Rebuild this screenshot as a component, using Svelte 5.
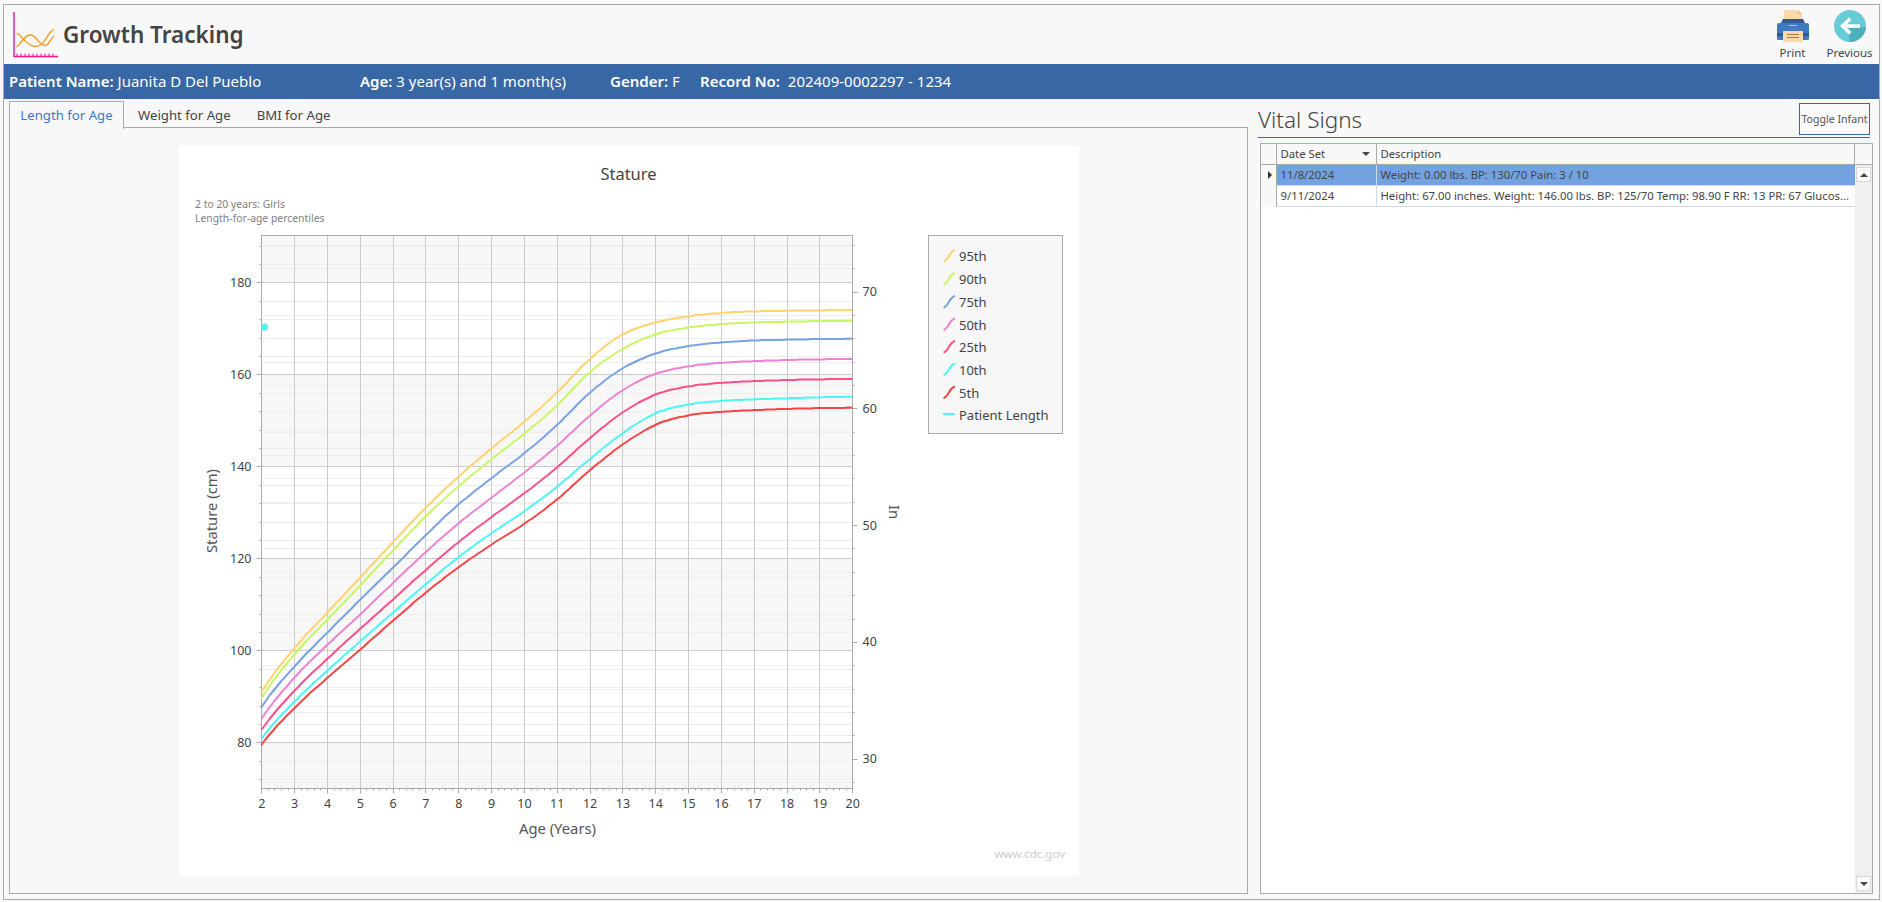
<script>
  const X0 = 179;
  const Y0 = 146;
  const W = 900;
  const H = 730;
  const ax = (a) => 261.3 + (a - 2) * 32.83 - X0;
  const cy = (c) => 742.3 - (c - 80) * 4.6 - Y0;
  const iy = (i) => 408.3 - (i - 60) * 11.68 - Y0;
  const crisp = (v) => Math.round(v) + 0.5;
  const L = crisp(ax(2));
  const R = crisp(ax(20));
  const T = 235.5 - Y0;
  const B = 788.5 - Y0;

  const ages = Array.from({ length: 19 }, (_, i) => i + 2);
  const bands = [[190, 180], [160, 140], [120, 100], [80, 70]];
  const cmMajor = [80, 100, 120, 140, 160, 180];
  const cmMinor = [];
  for (let c = 72; c <= 188; c += 4) if (c % 20 !== 0) cmMinor.push(c);
  const inMajor = [30, 40, 50, 60, 70];
  const inMinor = [];
  for (let i = 28; i <= 74; i += 2) if (i % 10 !== 0) inMinor.push(i);
  const ageMinor = [];
  for (let a = 2; a < 20; a += 0.2) if (Math.abs(a - Math.round(a)) > 0.01) ageMinor.push(a);

  const table = [
    [692.3, 698.3, 707.3, 719, 730, 739, 745],
    [647.3, 653.3, 665.7, 676.7, 690, 701, 707.3],
    [613, 620, 633, 645, 659, 670.7, 678],
    [578, 586, 600, 615, 629, 641.7, 650],
    [542.7, 550.7, 568.3, 583.3, 600, 613, 621],
    [507.3, 516, 535, 552, 570, 584, 592.5],
    [476.7, 486, 504, 523, 542, 557, 567],
    [448.3, 459.3, 478.3, 498, 517, 533, 544.5],
    [422.7, 434.3, 454, 473, 494, 512, 524.5],
    [393.3, 406.7, 426, 446.7, 468, 487.5, 500.5],
    [358, 370.7, 391.7, 415, 438, 459, 470],
    [332.7, 348.3, 367.3, 389.3, 411.7, 432.7, 444],
    [322, 333.3, 352.7, 372.7, 393.3, 411.7, 423.5],
    [316, 327.3, 345.7, 366, 386, 404, 414.7],
    [312.7, 324, 342.3, 362.7, 382.7, 400.7, 411.7],
    [311.3, 322.3, 340.3, 361, 381, 399.3, 410],
    [310.7, 321.7, 339.7, 360, 380, 398.3, 409],
    [310.3, 321, 339, 359.3, 379.3, 397.3, 408],
    [310, 320.7, 338.7, 359, 379, 396.7, 407.7]
  ];

  const series = [
    { name: '95th', color: '#ffd36e' },
    { name: '90th', color: '#c9f763' },
    { name: '75th', color: '#7aa3e2' },
    { name: '50th', color: '#ee82d2' },
    { name: '25th', color: '#fb4f8c' },
    { name: '10th', color: '#4df6f6' },
    { name: '5th', color: '#f34545' }
  ];

  function line(col) {
    const raw = table.map((r) => r[col] - Y0);
    const ys = raw.map((v, i) =>
      i === 0 || i === raw.length - 1 ? v : (raw[i - 1] + 6 * v + raw[i + 1]) / 8
    );
    const before = ys[0] + 1.45 * (ys[0] - ys[1]);
    const pts = [];
    for (let i = 0; i < ys.length - 1; i++) {
      const p0 = i === 0 ? before : ys[i - 1];
      const p1 = ys[i];
      const p2 = ys[i + 1];
      const p3 = ys[Math.min(i + 2, ys.length - 1)];
      for (let s = 0; s < 8; s++) {
        const t = s / 8;
        const v =
          0.5 *
          (2 * p1 +
            (p2 - p0) * t +
            (2 * p0 - 5 * p1 + 4 * p2 - p3) * t * t +
            (3 * p1 - p0 - 3 * p2 + p3) * t * t * t);
        pts.push(`${ax(2 + i + t).toFixed(1)},${(Math.round(v * 2) / 2).toFixed(1)}`);
      }
    }
    pts.push(`${ax(20).toFixed(1)},${ys[ys.length - 1].toFixed(1)}`);
    return pts.join(' ');
  }

  const legendYs = [256, 279, 302, 324.5, 347, 369.5, 392.5];
  const rows = [
    { date: '11/8/2024', desc: 'Weight: 0.00 lbs. BP: 130/70 Pain: 3 / 10', selected: true },
    { date: '9/11/2024', desc: 'Height: 67.00 inches. Weight: 146.00 lbs. BP: 125/70 Temp: 98.90 F RR: 13 PR: 67 Glucos...', selected: false }
  ];
</script>

<div class="window">
  <header class="head">
    <div class="brand">
      <svg class="logo" width="48" height="46" viewBox="0 0 48 46">
        <path d="M2 0V44.5H46" fill="none" stroke="#f0148c" stroke-width="1.4" />
        <path d="M5 44V41.5M9 44V41.5M13 44V41.5M17 44V41.5M21 44V41.5M25 44V41.5M29 44V41.5M33 44V41.5M37 44V41.5M41 44V41.5" stroke="#f0148c" stroke-width="1" />
        <path d="M5 21C10 24 15 34 23 34.5C31 35 34 26 37 22C38.5 20 40 18.5 42 17.5" fill="none" stroke="#f79a1e" stroke-width="1.3" />
        <path d="M4.5 35C9 32 12 23 18 23C25 23 27 33.5 33 33.5C37 33.5 38 27 42 24" fill="none" stroke="#f79a1e" stroke-width="1.3" />
      </svg>
      <h1>Growth Tracking</h1>
    </div>
    <div class="tools">
      <div class="tool tool-print">
        <svg width="32" height="32" viewBox="0 0 32 32">
          <path d="M7 0H21L25 4V13H7Z" fill="#fbd9ad" />
          <path d="M21 0L25 4H21Z" fill="#eebf88" />
          <path d="M6 9H26L28 13H4Z" fill="#2d5a90" />
          <path d="M2 13H30Q32 13 32 15V29Q32 30 30 30H2Q0 30 0 29V15Q0 13 2 13Z" fill="#3f7abf" />
          <rect x="0" y="23" width="32" height="3" fill="#2d5a90" />
          <rect x="12" y="15" width="8" height="1" fill="#a6c6e8" />
          <rect x="6" y="21" width="20" height="11" fill="#fbd9ad" />
          <path d="M10 24.5H22M10 27.5H22" stroke="#9c7b52" stroke-width="1" />
        </svg>
        <span>Print</span>
      </div>
      <div class="tool tool-prev">
        <svg width="32" height="32" viewBox="0 0 32 32">
          <circle cx="16" cy="16" r="16" fill="#67ccd6" />
          <path d="M15 24.5L17.5 22L14 17.8H26L32 17A16 16 0 0 1 15 32Z" fill="#4cafb9" />
          <path d="M6 16L15 7.5L17.5 10L12.8 14.2H26V17.8H12.8L17.5 22L15 24.5Z" fill="#fff" />
        </svg>
        <span>Previous</span>
      </div>
    </div>
  </header>

  <div class="patient">
    <span class="f f1"><b>Patient Name:</b> Juanita D Del Pueblo</span>
    <span class="f f2"><b>Age:</b> 3 year(s) and 1 month(s)</span>
    <span class="f f3"><b>Gender:</b> F</span>
    <span class="f f4"><b>Record No:</b>&nbsp; 202409-0002297 - 1234</span>
  </div>

  <main class="main">
    <section class="left">
      <nav class="tabs">
        <span class="tab active">Length for Age</span>
        <span class="tab">Weight for Age</span>
        <span class="tab">BMI for Age</span>
      </nav>
      <div class="panel">
        <svg class="chart" width={W} height={H} viewBox="0 0 {W} {H}">
          {#each bands as b}
            <rect x={L} y={Math.max(cy(b[0]), T)} width={R - L} height={Math.min(cy(b[1]), B) - Math.max(cy(b[0]), T)} fill="#f7f7f7" />
          {/each}
          {#each cmMinor as c}
            <line class="minor" x1={L} x2={R} y1={crisp(cy(c))} y2={crisp(cy(c))} />
            <line class="tick" x1={L - 2} x2={L} y1={crisp(cy(c))} y2={crisp(cy(c))} />
          {/each}
          {#each inMinor as i}
            {#if iy(i) > T && iy(i) < B}
              <line class="minor" x1={L} x2={R} y1={crisp(iy(i))} y2={crisp(iy(i))} />
              <line class="tick" x1={R} x2={R + 2} y1={crisp(iy(i))} y2={crisp(iy(i))} />
            {/if}
          {/each}
          {#each ages as a}
            <line class="major" x1={crisp(ax(a))} x2={crisp(ax(a))} y1={T} y2={B} />
            <line class="tick" x1={crisp(ax(a))} x2={crisp(ax(a))} y1={B} y2={B + 5} />
            <text class="lbl" x={ax(a) + 0.5} y={B + 19.5} text-anchor="middle">{a}</text>
          {/each}
          {#each ageMinor as a}
            <line class="tick" x1={crisp(ax(a))} x2={crisp(ax(a))} y1={B} y2={B + 2} />
          {/each}
          {#each cmMajor as c}
            <line class="major" x1={L} x2={R} y1={crisp(cy(c))} y2={crisp(cy(c))} />
            <line class="tick" x1={L - 5} x2={L} y1={crisp(cy(c))} y2={crisp(cy(c))} />
            <text class="lbl" x={L - 10} y={cy(c) + 4.5} text-anchor="end">{c}</text>
          {/each}
          {#each inMajor as i}
            <line class="tick" x1={R} x2={R + 5} y1={crisp(iy(i))} y2={crisp(iy(i))} />
            <text class="lbl" x={R + 10} y={iy(i) + 4.5}>{i}</text>
          {/each}
          <rect class="frame" x={L} y={T} width={R - L} height={B - T} />

          {#each series as s, k}
            <polyline points={line(k)} fill="none" stroke={s.color} stroke-width="2" stroke-linejoin="round" />
          {/each}
          <circle cx={264.5 - X0} cy={327 - Y0} r="3.3" fill="#4df6f6" stroke="#6fdce2" stroke-width="0.7" />

          <text class="title" x={628.5 - X0} y={180 - Y0} text-anchor="middle">Stature</text>
          <text class="sub" x={195 - X0} y={208 - Y0}>2 to 20 years: Girls</text>
          <text class="sub" x={195 - X0} y={222 - Y0}>Length-for-age percentiles</text>
          <text class="axis" transform="translate({217 - X0} {511 - Y0}) rotate(-90)" text-anchor="middle">Stature (cm)</text>
          <text class="axis" transform="translate({889 - X0} {512 - Y0}) rotate(90)" text-anchor="middle">In</text>
          <text class="axis" x={557.5 - X0} y={834 - Y0} text-anchor="middle">Age (Years)</text>
          <text class="mark" x={1065 - X0} y={858 - Y0} text-anchor="end">www.cdc.gov</text>

          <rect class="legend" x={928.5 - X0} y={235.5 - Y0} width="134" height="198" />
          {#each series as s, k}
            <path d="M{943.5 - X0} {legendYs[k] + 5.5 - Y0}C{948.5 - X0} {legendYs[k] + 4.5 - Y0} {949 - X0} {legendYs[k] - 4.5 - Y0} {955 - X0} {legendYs[k] - 6 - Y0}" fill="none" stroke={s.color} stroke-width="2" />
            <text class="leg" x={959 - X0} y={legendYs[k] + 5 - Y0}>{s.name}</text>
          {/each}
          <line x1={943 - X0} x2={955 - X0} y1={414 - Y0} y2={414 - Y0} stroke="#4df6f6" stroke-width="2" />
          <text class="leg" x={959 - X0} y={420 - Y0}>Patient Length</text>
        </svg>
      </div>
    </section>

    <section class="right">
      <div class="vs-head">
        <h2>Vital Signs</h2>
        <button class="toggle">Toggle Infant</button>
      </div>
      <div class="grid">
        <div class="g-head">
          <span class="c0"></span>
          <span class="c1">Date Set<i class="sort"></i></span>
          <span class="c2">Description</span>
          <span class="c3"></span>
        </div>
        <div class="g-body">
          <div class="g-rows">
            {#each rows as r}
              <div class="row" class:selected={r.selected}>
                <span class="c0">{#if r.selected}<i class="cursor"></i>{/if}</span>
                <span class="c1">{r.date}</span>
                <span class="c2">{r.desc}</span>
              </div>
            {/each}
          </div>
          <div class="scroll">
            <span class="sbtn"><i class="up"></i></span>
            <span class="sbtn"><i class="down"></i></span>
          </div>
        </div>
      </div>
    </section>
  </main>
</div>

<style>
  :global(body) {
    margin: 0;
    background: #f8f8f8;
    font-family: "Noto Sans", "Open Sans", sans-serif;
    color: #444;
  }
  .window {
    box-sizing: border-box;
    margin: 4px 2.5px 0 3px;
    height: 896px;
    border: 1px solid #aaa;
    display: flex;
    flex-direction: column;
    overflow: hidden;
  }
  .head {
    height: 59px;
    flex: none;
    display: flex;
    justify-content: space-between;
    box-sizing: border-box;
  }
  .brand {
    display: flex;
    align-items: flex-start;
    padding: 7px 0 0 8px;
  }
  .logo {
    flex: none;
  }
  h1 {
    margin: 7px 0 0 3px;
    font-size: 22.5px;
    line-height: 32px;
    font-weight: 600;
    color: #444;
  }
  .tools {
    display: flex;
    padding: 5px 3px 0 0;
  }
  .tool {
    display: flex;
    flex-direction: column;
    align-items: center;
    font-size: 11.5px;
    line-height: 16px;
    color: #444;
  }
  .tool svg {
    margin-bottom: 3px;
  }
  .tool-print {
    width: 60px;
    margin-right: 1px;
  }
  .tool-prev {
    width: 52px;
  }
  .patient {
    height: 35px;
    flex: none;
    background: #3867a5;
    color: #fff;
    display: flex;
    align-items: center;
    font-size: 15px;
    white-space: nowrap;
    box-sizing: border-box;
    padding-left: 5px;
    padding-bottom: 1px;
  }
  .patient b {
    font-weight: 600;
  }
  .f {
    display: block;
  }
  .f1 { width: 351px; }
  .f2 { width: 250px; }
  .f3 { width: 90px; }
  .main {
    flex: 1;
    min-height: 0;
    display: flex;
    padding: 2px 0 5px 5px;
  }
  .left {
    width: 1239px;
    flex: none;
    display: flex;
    flex-direction: column;
  }
  .tabs {
    display: flex;
    height: 27px;
    flex: none;
    font-size: 13.2px;
    margin-bottom: -1px;
    position: relative;
  }
  .tab {
    box-sizing: border-box;
    height: 28px;
    line-height: 26px;
    padding: 0 12px;
    border: 1px solid transparent;
    border-bottom: 0;
    white-space: nowrap;
    color: #444;
  }
  .tab.active {
    color: #3a78c9;
    background: #f8f8f8;
    border-color: #aaa;
    width: 115px;
    text-align: center;
    padding: 0;
    margin-right: 1px;
  }
  .panel {
    flex: 1;
    min-height: 0;
    box-sizing: border-box;
    border: 1px solid #aaa;
    display: flex;
    justify-content: center;
    align-items: flex-start;
    padding-top: 18px;
  }
  .chart {
    display: block;
    background: #fff;
  }
  .minor { stroke: #eeeeee; stroke-width: 1; }
  .major { stroke: #cbcbcb; stroke-width: 1; }
  .tick { stroke: #aaa; stroke-width: 1; }
  .frame { fill: none; stroke: #aaa; stroke-width: 1; }
  .lbl { font-size: 12.5px; fill: #444; }
  .title { font-size: 16.5px; fill: #444; }
  .sub { font-size: 10.4px; fill: #808080; }
  .axis { font-size: 14.8px; fill: #555; }
  .mark { font-size: 11.5px; fill: #ccc; }
  .legend { fill: #f7f7f7; stroke: #aaa; stroke-width: 1; }
  .leg { font-size: 13px; fill: #444; }

  .right {
    flex: 1;
    min-width: 0;
    display: flex;
    flex-direction: column;
    padding: 2px 5.5px 0 10px;
  }
  .vs-head {
    height: 35px;
    flex: none;
    box-sizing: border-box;
    display: flex;
    justify-content: space-between;
    align-items: flex-start;
    border-bottom: 1px solid #3867a5;
    margin-right: 3px;
  }
  h2 {
    margin: 0;
    font-size: 22.5px;
    line-height: 34px;
    font-weight: 300;
    color: #444;
  }
  .toggle {
    box-sizing: border-box;
    width: 71px;
    height: 32px;
    padding: 0;
    background: #fafafa;
    border: 1px solid #3867a5;
    font: 10.6px/1 "Noto Sans", sans-serif;
    color: #555;
    white-space: nowrap;
    overflow: hidden;
  }
  .grid {
    flex: 1;
    min-height: 0;
    margin: 5px 0 0 1.5px;
    border: 1px solid #aaa;
    background: #fff;
    display: flex;
    flex-direction: column;
    font-size: 11.3px;
    color: #444;
  }
  .g-head {
    height: 20px;
    flex: none;
    display: flex;
    background: #f8f8f8;
    border-bottom: 1px solid #aaa;
    line-height: 19px;
  }
  .c0 {
    width: 15px;
    flex: none;
    box-sizing: content-box;
    position: relative;
  }
  .c1 {
    width: 95px;
    flex: none;
    padding-left: 4px;
    position: relative;
  }
  .c2 {
    flex: 1;
    min-width: 0;
    padding-left: 4px;
    white-space: nowrap;
    overflow: hidden;
  }
  .c3 {
    width: 17px;
    flex: none;
  }
  .g-head .c0, .g-head .c1, .g-head .c2 {
    border-right: 1px solid #aaa;
  }
  .sort {
    position: absolute;
    right: 6px;
    top: 8px;
    border: 4px solid transparent;
    border-top: 4px solid #444;
    border-bottom: 0;
  }
  .g-body {
    flex: 1;
    min-height: 0;
    display: flex;
  }
  .g-rows {
    flex: 1;
    min-width: 0;
  }
  .row {
    display: flex;
    height: 21px;
    box-sizing: border-box;
    line-height: 20px;
    border-bottom: 1px solid #cfdbe8;
  }
  .row .c0 {
    background: #f8f8f8;
    border-right: 1px solid #aaa;
    margin-bottom: -1px;
  }
  .row .c1 {
    border-right: 1px solid #cfdbe8;
  }
  .row.selected {
    background: #73a2e0;
  }
  .cursor {
    position: absolute;
    left: 7px;
    top: 6px;
    border: 4px solid transparent;
    border-left: 4px solid #333;
    border-right: 0;
  }
  .scroll {
    width: 17px;
    flex: none;
    background: #f0f0f0;
    display: flex;
    flex-direction: column;
    justify-content: space-between;
    align-items: center;
    padding: 2px 0 2px;
    box-sizing: border-box;
  }
  .sbtn {
    box-sizing: border-box;
    width: 15px;
    height: 15px;
    background: #fafafa;
    border: 1px solid #d8d8d8;
    display: flex;
    align-items: center;
    justify-content: center;
  }
  .up {
    border: 4px solid transparent;
    border-bottom: 4px solid #444;
    border-top: 0;
  }
  .down {
    border: 4px solid transparent;
    border-top: 4px solid #444;
    border-bottom: 0;
  }
</style>
